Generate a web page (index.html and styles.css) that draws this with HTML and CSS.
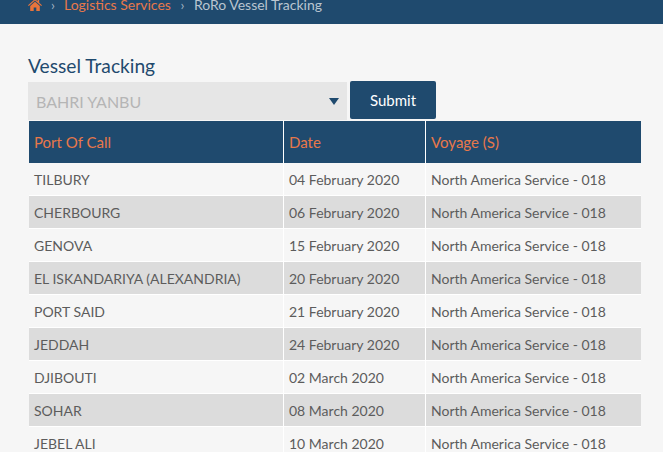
FILE: index.html
```html
<!DOCTYPE html>
<html lang="en">
<head>
<meta charset="utf-8">
<title>Vessel Tracking</title>
<link rel="stylesheet" href="styles.css">
</head>
<body>
<nav class="crumbs">
  <svg class="home" width="14" height="12" viewBox="0 0 14 12"><path fill="#e8743b" d="M7 0 L9.6 2.3 V1 H11.2 V3.7 L14 6.2 L13.2 7 L7 1.6 L.8 7 L0 6.2 Z M2.2 7 L7 2.8 L11.8 7 V12 H8.3 V8.4 H5.7 V12 H2.2 Z"/></svg>
  <span class="sep">›</span>
  <a class="crumb-link">Logistics Services</a>
  <span class="sep sep-wide">›</span>
  <span class="crumb-current">RoRo Vessel Tracking</span>
</nav>
<main class="content">
  <h1 class="title">Vessel Tracking</h1>
  <form class="controls">
    <div class="select"><span class="select-value">BAHRI YANBU</span><span class="arrow"></span></div>
    <button class="submit" type="button">Submit</button>
  </form>
  <table class="grid">
    <colgroup><col class="c1"><col class="c2"><col class="c3"></colgroup>
    <thead><tr><th>Port Of Call</th><th>Date</th><th>Voyage (S)</th></tr></thead>
    <tbody>
      <tr><td>TILBURY</td><td>04 February 2020</td><td>North America Service - 018</td></tr>
      <tr><td>CHERBOURG</td><td>06 February 2020</td><td>North America Service - 018</td></tr>
      <tr><td>GENOVA</td><td>15 February 2020</td><td>North America Service - 018</td></tr>
      <tr><td>EL ISKANDARIYA (ALEXANDRIA)</td><td>20 February 2020</td><td>North America Service - 018</td></tr>
      <tr><td>PORT SAID</td><td>21 February 2020</td><td>North America Service - 018</td></tr>
      <tr><td>JEDDAH</td><td>24 February 2020</td><td>North America Service - 018</td></tr>
      <tr><td>DJIBOUTI</td><td>02 March 2020</td><td>North America Service - 018</td></tr>
      <tr><td>SOHAR</td><td>08 March 2020</td><td>North America Service - 018</td></tr>
      <tr><td>JEBEL ALI</td><td>10 March 2020</td><td>North America Service - 018</td></tr>
    </tbody>
  </table>
</main>
</body>
</html>
```
FILE: styles.css
```css
html, body { margin: 0; padding: 0; height: 452px; overflow: hidden; }
body { background: #f6f6f6; font-family: Lato, "Liberation Sans", sans-serif; color: #555; }
.crumbs { height: 24px; background: #1f4a6e; display: flex; align-items: flex-end; padding: 0 0 11px 28px; box-sizing: border-box; font-size: 14px; line-height: 17px; overflow: hidden; }
.home { flex: none; margin-bottom: 2px; }
.sep { color: #9fb2c3; width: 22px; text-align: center; }
.sep-wide { width: 23px; }
.crumb-link { color: #e8784a; }
.crumb-current { color: #b9c5d0; }
.content { padding: 30px 22px 0 28px; }
.title { margin: 0; font-size: 19.2px; font-weight: 400; line-height: 24px; color: #1f4a6e; }
.controls { display: flex; align-items: flex-start; margin-top: 3px; }
.select { width: 319px; height: 38px; margin-top: 1px; background: #e6e6e6; display: flex; align-items: center; justify-content: space-between; padding: 0 8px; box-sizing: border-box; }
.select-value { font-size: 16px; color: #b5b5b5; }
.arrow { width: 0; height: 0; border-left: 5px solid transparent; border-right: 5px solid transparent; border-top: 7px solid #1f4a6e; }
.submit { margin-left: 3px; width: 86px; height: 38px; border: 0; border-radius: 2px; background: #1f4a6e; color: #fff; font: 15px Lato, "Liberation Sans", sans-serif; }
.grid { margin: 1px 0 0 1px; width: 612px; border-collapse: separate; border-spacing: 0; table-layout: fixed; font-size: 14px; }
.c1 { width: 255px; } .c2 { width: 142px; } .c3 { width: 215px; }
th { height: 42px; padding: 0 5px; box-sizing: border-box; background: #1f4a6e; color: #e8784a; font-weight: 400; font-size: 15px; text-align: left; border-right: 1px solid #fff; }
th:last-child, td:last-child { border-right: 0; }
td { height: 33px; padding: 0 5px; box-sizing: border-box; border-right: 1px solid #fff; border-bottom: 1px solid #fff; color: #5c5c5c; }
tbody tr:nth-child(even) td { background: #dcdcdc; }
```
